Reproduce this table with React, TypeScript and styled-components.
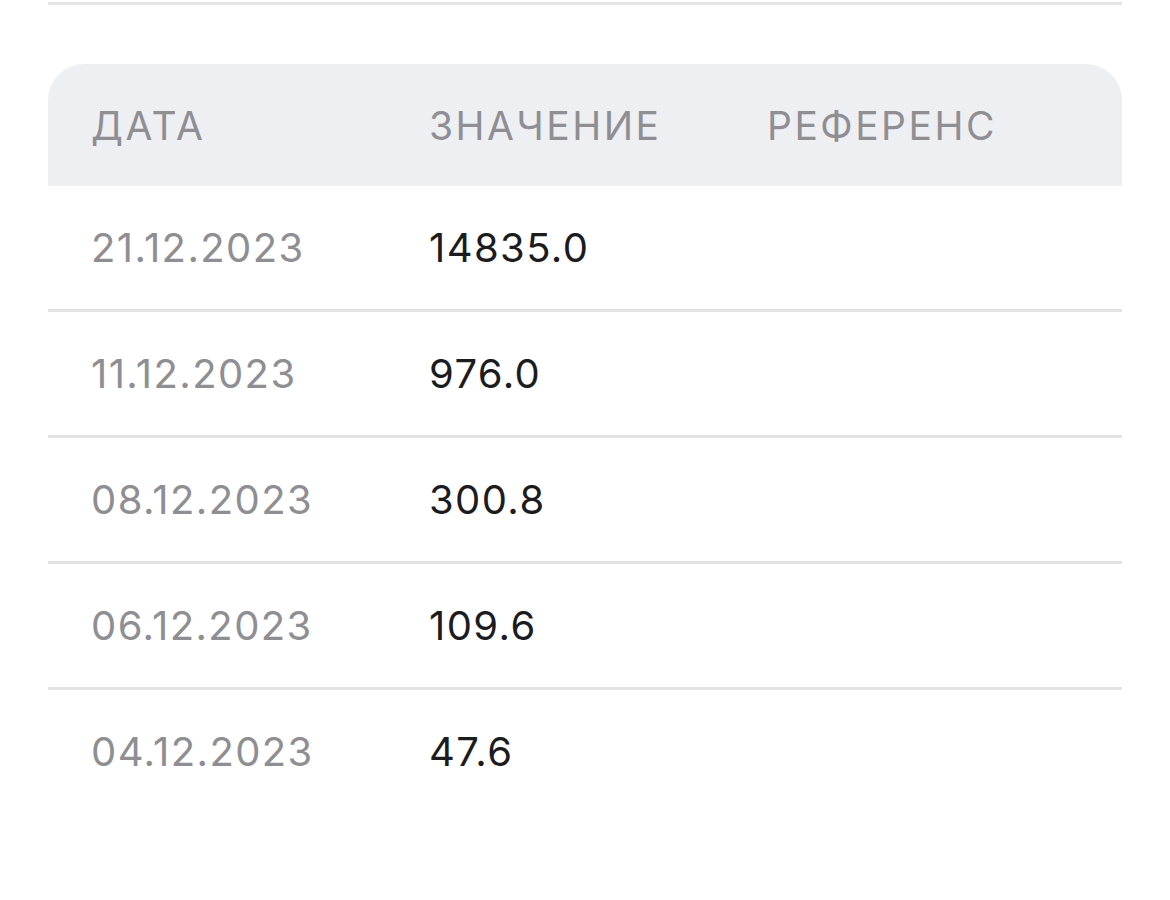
import styled, { createGlobalStyle } from 'styled-components';

const GlobalStyle = createGlobalStyle`
  html, body {
    margin: 0;
    padding: 0;
    background: #ffffff;
    font-family: Inter, "Noto Sans", "Liberation Sans", sans-serif;
    -webkit-font-smoothing: antialiased;
  }
`;

type Row = { date: string; value: string; reference?: string };

const rows: Row[] = [
  { date: '21.12.2023', value: '14835.0' },
  { date: '11.12.2023', value: '976.0' },
  { date: '08.12.2023', value: '300.8' },
  { date: '06.12.2023', value: '109.6' },
  { date: '04.12.2023', value: '47.6' },
];

const Page = styled.div`
  padding: 2px 48px 0;
`;

const TopDivider = styled.div`
  height: 3px;
  background: #e6e6e8;
`;

const Table = styled.div`
  margin-top: 59px;
`;

const HeaderRow = styled.div`
  display: grid;
  grid-template-columns: 338px 338px 1fr;
  align-items: center;
  height: 122px;
  padding-left: 43px;
  background: #eeeff3;
  border-radius: 36px 36px 0 0;
`;

const HeaderCell = styled.div`
  font-size: 39px;
  font-weight: 400;
  letter-spacing: 2.5px;
  color: #8e8e93;
  text-transform: uppercase;
  line-height: 1;
`;

const BodyRow = styled.div<{ $last?: boolean }>`
  display: grid;
  grid-template-columns: 338px 338px 1fr;
  align-items: center;
  height: 123px;
  padding-left: 43px;
  border-bottom: 3px solid ${({ $last }) => ($last ? 'transparent' : '#e3e3e6')};
`;

const Cell = styled.div<{ $muted?: boolean }>`
  font-size: 40px;
  font-weight: 400;
  line-height: 1;
  letter-spacing: 1.4px;
  color: ${({ $muted }) => ($muted ? '#8e8e93' : '#1c1c1e')};
`;

export default function App() {
  return (
    <>
      <GlobalStyle />
      <Page>
        <TopDivider />
        <Table>
          <HeaderRow>
            <HeaderCell>Дата</HeaderCell>
            <HeaderCell>Значение</HeaderCell>
            <HeaderCell>Референс</HeaderCell>
          </HeaderRow>
          {rows.map((row, i) => (
            <BodyRow key={row.date} $last={i === rows.length - 1}>
              <Cell $muted>{row.date}</Cell>
              <Cell>{row.value}</Cell>
              <Cell>{row.reference ?? ''}</Cell>
            </BodyRow>
          ))}
        </Table>
      </Page>
    </>
  );
}
